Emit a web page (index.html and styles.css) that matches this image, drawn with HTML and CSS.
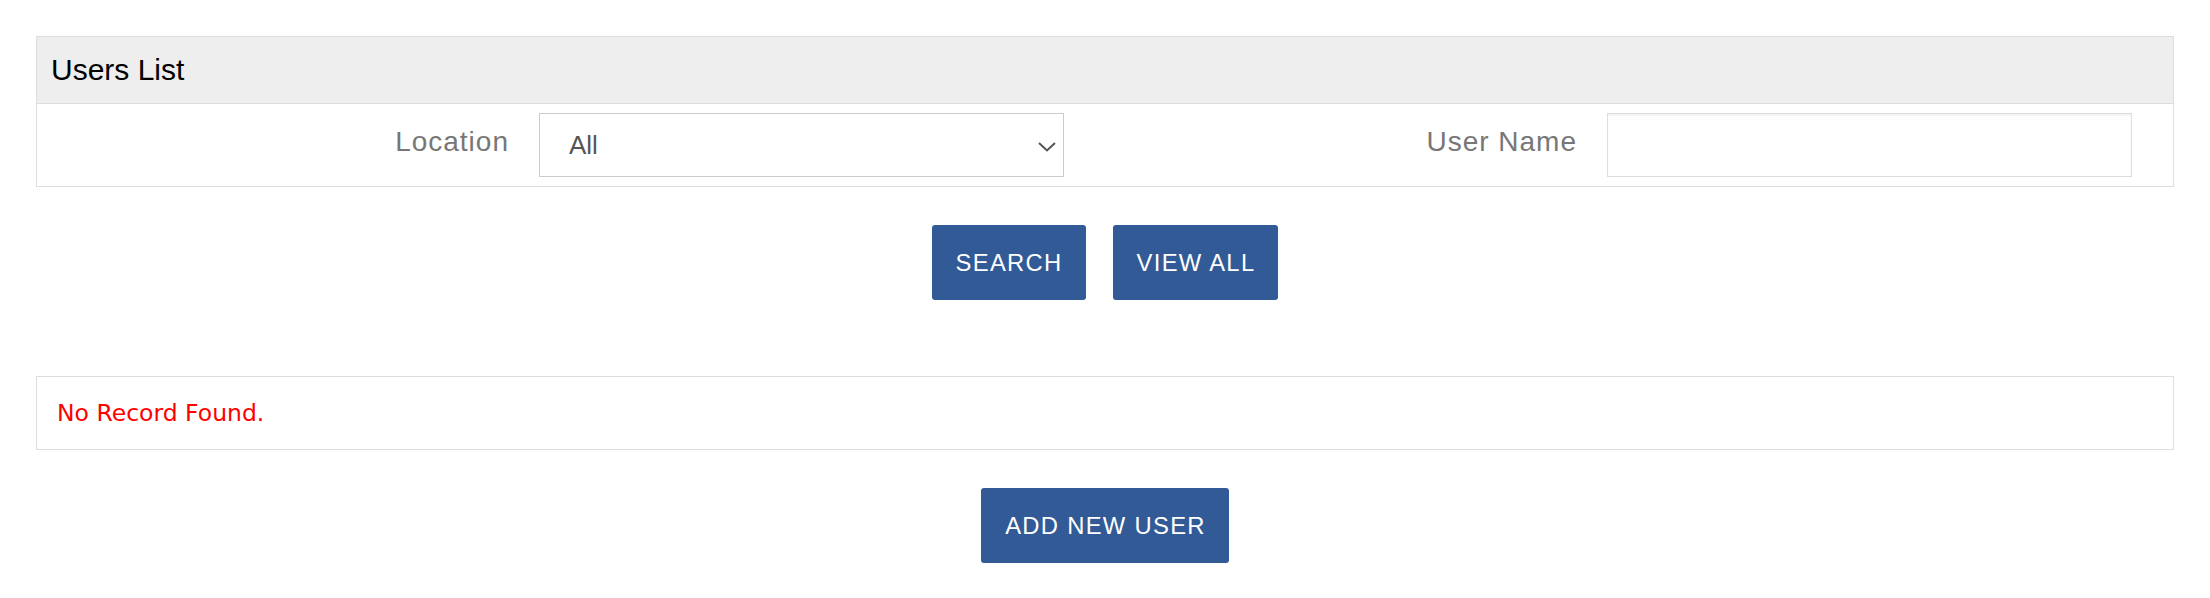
FILE: index.html
```html
<!DOCTYPE html>
<html>
<head>
<meta charset="utf-8">
<link rel="stylesheet" href="styles.css">
</head>
<body>
<div class="page">
  <div class="panel">
    <div class="panel-head">Users List</div>
    <div class="panel-body">
      <div class="field">
        <label class="label">Location</label>
        <div class="select-wrap">
          <select class="control select"><option>All</option></select>
          <svg class="chev" width="18" height="10" viewBox="0 0 18 10"><path d="M1 1 L9 8.5 L17 1" fill="none" stroke="#555" stroke-width="2"/></svg>
        </div>
      </div>
      <div class="field">
        <label class="label">User Name</label>
        <input class="control input" type="text">
      </div>
    </div>
  </div>
  <div class="actions">
    <button class="btn">SEARCH</button>
    <button class="btn">VIEW ALL</button>
  </div>
  <div class="results">No Record Found.</div>
  <div class="actions">
    <button class="btn">ADD NEW USER</button>
  </div>
</div>
</body>
</html>
```
FILE: styles.css
```css
html, body { margin: 0; padding: 0; background: #fff; }
body { font-family: "Liberation Sans", Arial, sans-serif; }
.page { padding: 36px 36px 0 36px; }
.panel { border: 1px solid #ddd; }
.panel-head {
  background: #eee;
  border-bottom: 1px solid #ddd;
  height: 66px;
  display: flex;
  align-items: center;
  padding-left: 14px;
  font-size: 30px;
  color: #000;
}
.panel-body {
  display: grid;
  grid-template-columns: 1fr 1fr;
  padding: 9px 0;
}
.field {
  display: grid;
  grid-template-columns: 1fr 525px;
  column-gap: 30px;
  padding-right: 41px;
  align-items: center;
}
.label {
  text-align: right;
  font-size: 28px;
  letter-spacing: 1px;
  color: #777;
  padding-bottom: 6px;
}
.control {
  box-sizing: border-box;
  height: 64px;
  width: 525px;
  margin: 0;
  font-family: "Liberation Sans", Arial, sans-serif;
}
.select-wrap { position: relative; width: 525px; height: 64px; }
.select {
  appearance: none;
  -webkit-appearance: none;
  background: #fff;
  border: 1px solid #ccc;
  border-radius: 0;
  font-size: 26px;
  color: #555;
  padding: 0 0 0 29px;
}
.chev { position: absolute; left: 499px; top: 29px; }
.input {
  border: 1px solid #ddd;
  border-radius: 0;
  box-shadow: inset 0 2px 2px rgba(0,0,0,0.05);
  background: #fff;
}
.actions {
  display: flex;
  justify-content: center;
  gap: 27px;
  padding: 38px 0;
}
.btn {
  background: #325a96;
  color: #fff;
  border: none;
  border-radius: 3px;
  height: 75px;
  padding: 0 23px 0 24px;
  font-family: "Liberation Sans", Arial, sans-serif;
  font-size: 23.8px;
  letter-spacing: 1.3px;
}
.results {
  margin-top: 38px;
  border: 1px solid #ddd;
  height: 72px;
  display: flex;
  align-items: center;
  padding-left: 20px;
  font-family: "DejaVu Sans", sans-serif;
  font-size: 23.5px;
  color: #f00;
}
```
